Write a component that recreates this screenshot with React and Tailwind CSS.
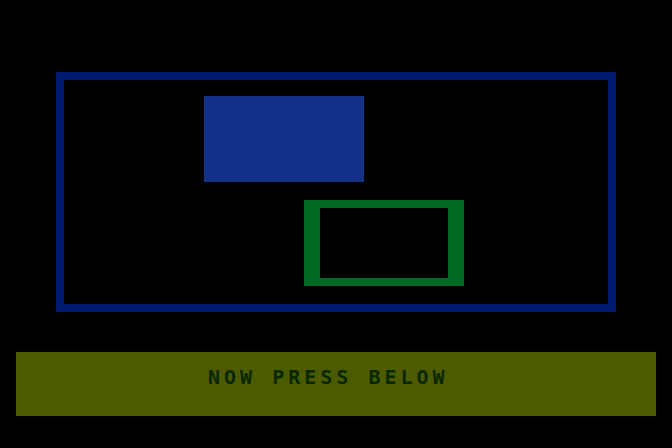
export default function App() {
  return (
    <div className="w-[672px] h-[448px] bg-black overflow-hidden">
      <div className="pt-[72px] px-[56px]">
        <div className="h-[240px] border-8 border-[#001c70]">
          <div className="ml-[140px] mt-[16px] w-[160px] h-[86px] bg-[#14318a]" />
          <div className="ml-[240px] mt-[18px] w-[160px] h-[86px] border-y-8 border-x-16 border-[#006a24]" />
        </div>
      </div>
      <div className="mt-[40px] mx-[16px] h-[64px] bg-[#4c5a00] pt-[15px] pl-[192px]">
        <span className="block font-['DejaVu_Sans_Mono',monospace] font-bold text-[20px] leading-none tracking-[4px] text-[#0a2800] uppercase">
          Now press below
        </span>
      </div>
    </div>
  );
}
